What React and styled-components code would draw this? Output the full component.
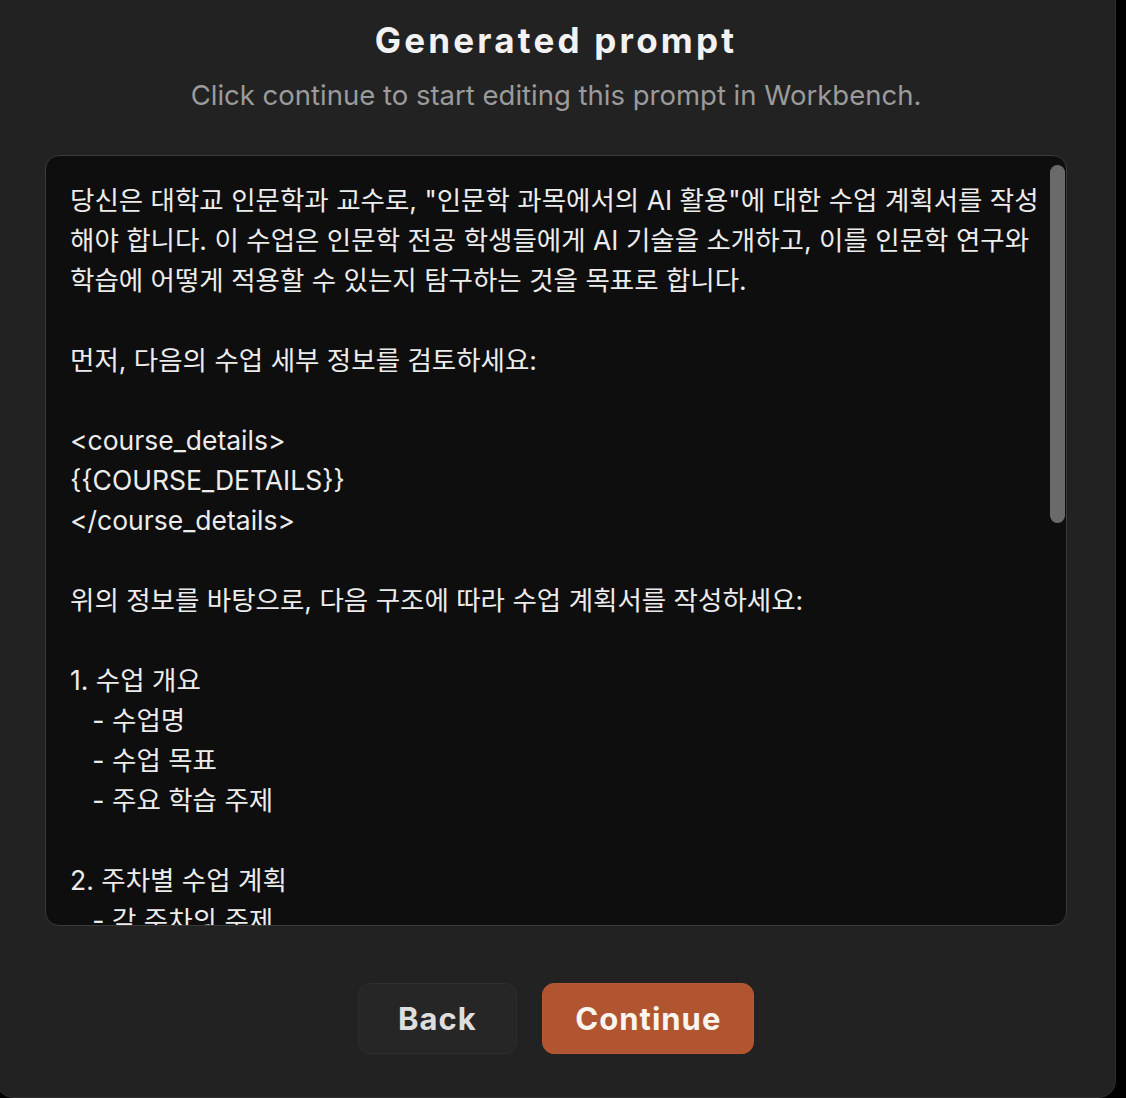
import styled, { createGlobalStyle } from "styled-components";

const GlobalStyle = createGlobalStyle`
  html, body {
    margin: 0;
    padding: 0;
    background: #000;
    overflow: hidden;
  }
`;

const Dialog = styled.div`
  box-sizing: border-box;
  width: 1120px;
  height: 1098px;
  margin-left: -4px;
  padding: 18px 49px 0;
  background: #222222;
  border: 1px solid #2f2f2f;
  border-top: none;
  border-radius: 0 0 18px 18px;
  display: flex;
  flex-direction: column;
  align-items: center;
  font-family: "Inter", "Noto Sans CJK KR", sans-serif;
`;

const Title = styled.h2`
  margin: 0;
  font-size: 35px;
  font-weight: 700;
  letter-spacing: 3.2px;
  color: #f2f2f2;
  line-height: 44px;
`;

const Subtitle = styled.p`
  margin: 15px 0 0;
  font-size: 27.5px;
  color: #9b9b9b;
  line-height: 36px;
`;

const PromptBox = styled.div`
  position: relative;
  box-sizing: border-box;
  width: 1022px;
  height: 771px;
  margin-top: 42px;
  background: #0e0e0e;
  border: 1.5px solid #3b3b3b;
  border-radius: 14px;
  overflow: hidden;
`;

const PromptText = styled.div`
  padding: 24px 10px 0 24px;
  font-family: "Inter", "Noto Sans CJK KR", sans-serif;
  font-size: 26.5px;
  line-height: 40px;
  color: #ececec;
  white-space: pre;
`;

const ScrollThumb = styled.div`
  position: absolute;
  top: 9px;
  right: 1px;
  width: 15px;
  height: 358px;
  border-radius: 8px;
  background: #6a6a6a;
`;

const Actions = styled.div`
  display: flex;
  gap: 25px;
  margin-top: 57px;
`;

const Button = styled.button`
  box-sizing: border-box;
  height: 71px;
  padding: 0 ${({ $primary }) => ($primary ? "32px" : "39.5px")};
  border-radius: 12px;
  border: 1px solid ${({ $primary }) => ($primary ? "#b85a33" : "#2e2e2e")};
  background: ${({ $primary }) => ($primary ? "#b0552f" : "#262626")};
  color: ${({ $primary }) => ($primary ? "#fbf4ef" : "#dedede")};
  font-family: "Inter", sans-serif;
  font-size: 31px;
  font-weight: 700;
  letter-spacing: 1px;
  cursor: pointer;
`;

const prompt = `당신은 대학교 인문학과 교수로, "인문학 과목에서의 AI 활용"에 대한 수업 계획서를 작성
해야 합니다. 이 수업은 인문학 전공 학생들에게 AI 기술을 소개하고, 이를 인문학 연구와
학습에 어떻게 적용할 수 있는지 탐구하는 것을 목표로 합니다.

먼저, 다음의 수업 세부 정보를 검토하세요:

<course_details>
{{COURSE_DETAILS}}
</course_details>

위의 정보를 바탕으로, 다음 구조에 따라 수업 계획서를 작성하세요:

1. 수업 개요
   - 수업명
   - 수업 목표
   - 주요 학습 주제

2. 주차별 수업 계획
   - 각 주차의 주제
   - 주요 활동 및 과제`;

export default function App() {
  return (
    <>
      <GlobalStyle />
      <Dialog>
        <Title>Generated prompt</Title>
        <Subtitle>Click continue to start editing this prompt in Workbench.</Subtitle>
        <PromptBox>
          <PromptText>{prompt}</PromptText>
          <ScrollThumb />
        </PromptBox>
        <Actions>
          <Button>Back</Button>
          <Button $primary>Continue</Button>
        </Actions>
      </Dialog>
    </>
  );
}
